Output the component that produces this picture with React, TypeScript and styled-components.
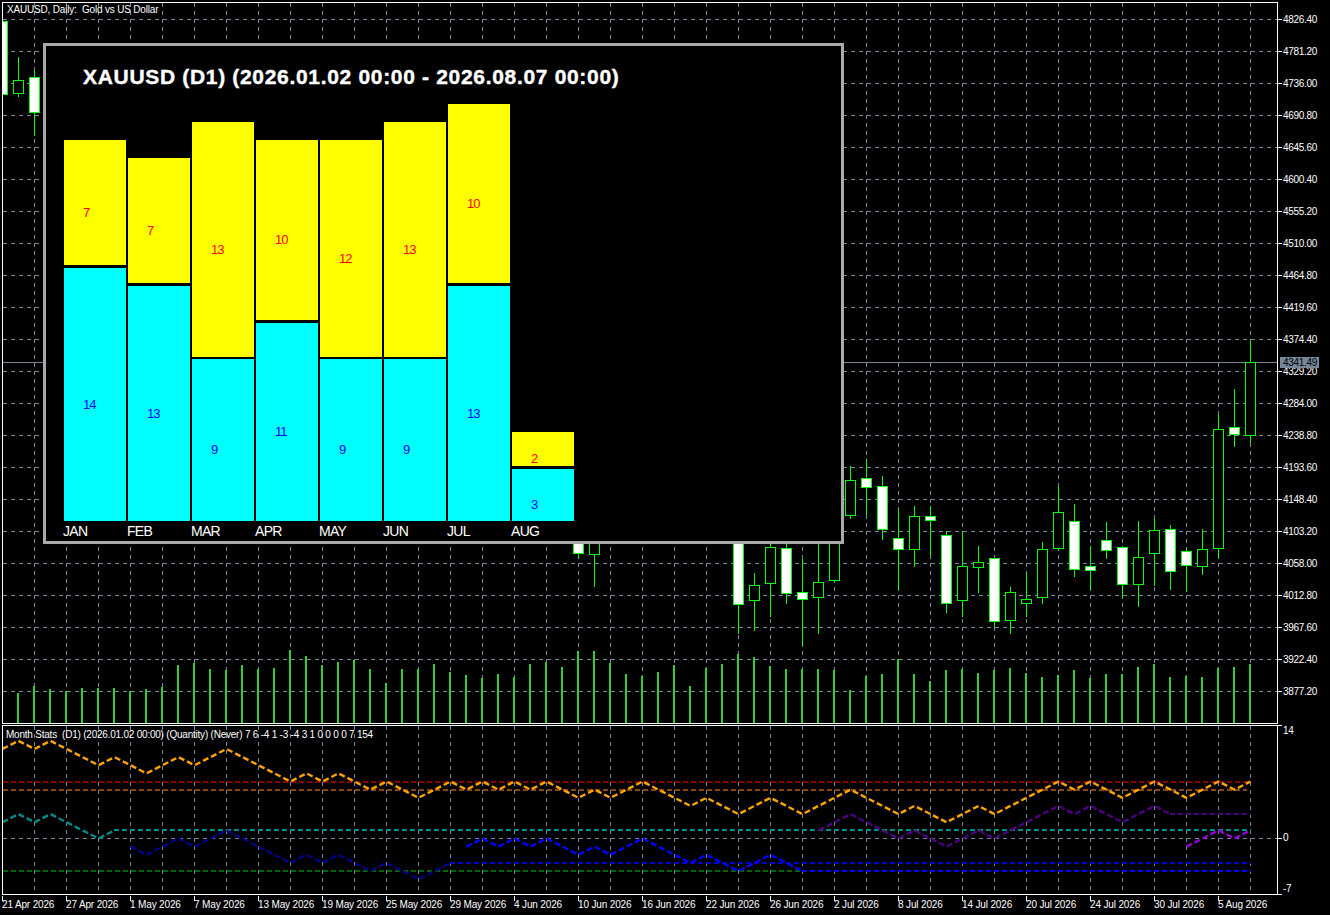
import React from 'react';
import styled, { createGlobalStyle } from 'styled-components';

const GlobalStyle = createGlobalStyle`
  html, body {
    margin: 0;
    background: #000000;
    overflow: hidden;
  }
`;

const GRID = '#778899';
const LIME = '#00ff00';
const VOLUME = '#32cd32';
const FONT = `'Liberation Sans', Arial, sans-serif`;

const Screen = styled.div`
  width: 1330px;
  height: 915px;
  box-sizing: border-box;
  padding: 2px 0 0 2px;
  display: flex;
  background: #000000;
  overflow: hidden;
  color: #ffffff;
  font-family: ${FONT};
`;

const ChartColumn = styled.div`
  width: 1276px;
  display: flex;
  flex-direction: column;
  gap: 1px;
`;

const Pane = styled.div<{ $height: number }>`
  position: relative;
  height: ${(p) => p.$height}px;
  box-sizing: border-box;
  border: 1px solid #ffffff;
`;

const PaneCanvas = styled.svg`
  display: block;
  width: 100%;
  height: 100%;
`;

const PaneCaption = styled.div<{ $left: number; $top: number; $tracking: number }>`
  position: absolute;
  left: ${(p) => p.$left}px;
  top: ${(p) => p.$top}px;
  font-size: 10px;
  line-height: 12px;
  white-space: pre;
  letter-spacing: ${(p) => p.$tracking}px;
`;

const TimeAxis = styled.div`
  display: flex;
  height: 20px;
`;

const TimeCell = styled.div`
  width: 64px;
  flex: none;
  white-space: nowrap;
`;

const TimeTick = styled.div`
  width: 1px;
  height: 5px;
  background: #ffffff;
`;

const TimeLabel = styled.div`
  margin-top: -2px;
  font-size: 10px;
  line-height: 12px;
  letter-spacing: -0.15px;
`;

const PriceAxis = styled.div`
  position: relative;
  flex: 1;
  display: flex;
  flex-direction: column;
`;

const MainScale = styled.div`
  height: 723px;
  box-sizing: border-box;
  padding-top: 1px;
`;

const IndicatorScale = styled.div`
  height: 170px;
  display: grid;
  grid-template-rows: 113px 56px 1px;
`;

const ScaleRow = styled.div<{ $height?: number }>`
  display: flex;
  align-items: flex-start;
  height: ${(p) => (p.$height ? `${p.$height}px` : 'auto')};
`;

const ScaleTick = styled.div<{ $top?: number }>`
  width: 4px;
  height: 1px;
  flex: none;
  margin-top: ${(p) => p.$top ?? 0}px;
  background: #ffffff;
`;

const ScaleLabel = styled.div<{ $top?: number }>`
  margin-top: ${(p) => p.$top ?? 0}px;
  margin-left: 1px;
  font-size: 10px;
  line-height: 8px;
  letter-spacing: -0.3px;
  white-space: nowrap;
`;

const PriceBadge = styled.div`
  position: absolute;
  left: 2px;
  top: 355px;
  width: 39px;
  height: 11px;
  padding-left: 3px;
  box-sizing: border-box;
  background: #778899;
  color: #000000;
  font-size: 10px;
  line-height: 11px;
  letter-spacing: -0.3px;
`;

/* statistics window laid over the chart */
const StatsPanel = styled.div`
  position: absolute;
  left: 40px;
  top: 40px;
  width: 801px;
  height: 501px;
  box-sizing: border-box;
  display: flex;
  flex-direction: column;
  padding-left: 18px;
  background: #000000;
  border: 3px solid #a9a9a9;
`;

const StatsTitle = styled.div`
  height: 54px;
  padding: 4px 0 0 19px;
  display: flex;
  align-items: center;
  font-size: 21px;
  font-weight: 700;
  letter-spacing: 0.68px;
  -webkit-text-stroke: 0.4px #ffffff;
  white-space: nowrap;
`;

const BarRow = styled.div`
  height: 417px;
  display: flex;
  align-items: flex-end;
  gap: 2px;
`;

const MonthColumn = styled.div<{ $gap: number }>`
  width: 62px;
  display: flex;
  flex-direction: column;
  gap: ${(p) => p.$gap}px;
`;

const MonthBlock = styled.div<{ $height: number; $tone: 'loss' | 'gain' }>`
  height: ${(p) => p.$height}px;
  box-sizing: border-box;
  display: flex;
  align-items: center;
  padding: 20px 0 0 19px;
  background: ${(p) => (p.$tone === 'loss' ? '#ffff00' : '#00ffff')};
  color: ${(p) => (p.$tone === 'loss' ? '#ff0000' : '#0000ff')};
  font-size: 13px;
  line-height: 14px;
  letter-spacing: -1px;
`;

const MonthLabels = styled.div`
  display: flex;
  margin-left: -1px;
  padding-top: 3px;
`;

const MonthLabel = styled.div`
  width: 64px;
  font-size: 14px;
  line-height: 14px;
  letter-spacing: -0.7px;
`;

const xAt = (i: number) => 2 + 16 * i;
const gridXs = Array.from({ length: 39 }, (_, i) => 34 + 32 * i);
const gridYs = Array.from({ length: 22 }, (_, i) => 19 + 32 * i);
const prices = gridYs.map((_, i) => (4826.4 - 45.2 * i).toFixed(2));

// x, wick top, wick bottom, body top, body bottom, bearish (white)
const candles: [number, number, number, number, number, boolean][] = [
  [2, 10, 100, 21, 94, true],
  [18, 57, 97, 80, 93, false],
  [34, 70, 136, 77, 112, true],
  [578, 500, 558, 500, 553, true],
  [594, 500, 587, 500, 554, false],
  [738, 500, 634, 500, 604, true],
  [754, 573, 631, 585, 600, false],
  [770, 500, 617, 547, 583, false],
  [786, 543, 604, 548, 593, true],
  [802, 559, 646, 592, 599, true],
  [818, 500, 634, 582, 597, false],
  [834, 500, 582, 500, 580, false],
  [850, 466, 519, 480, 515, false],
  [866, 459, 515, 478, 487, true],
  [882, 476, 540, 486, 529, true],
  [898, 509, 590, 538, 549, true],
  [914, 506, 567, 516, 549, false],
  [930, 506, 556, 516, 520, true],
  [946, 531, 613, 535, 603, true],
  [962, 531, 617, 566, 600, false],
  [978, 546, 593, 562, 567, false],
  [994, 558, 627, 558, 621, true],
  [1010, 587, 634, 592, 620, false],
  [1026, 573, 617, 599, 603, false],
  [1042, 542, 604, 549, 597, false],
  [1058, 486, 551, 512, 548, false],
  [1074, 504, 577, 521, 569, true],
  [1090, 546, 590, 566, 570, true],
  [1106, 522, 559, 540, 550, true],
  [1122, 546, 598, 547, 584, true],
  [1138, 521, 607, 557, 584, false],
  [1154, 518, 586, 530, 553, false],
  [1170, 525, 590, 529, 571, true],
  [1186, 548, 592, 551, 565, true],
  [1202, 529, 575, 549, 566, false],
  [1218, 414, 559, 429, 548, false],
  [1234, 389, 447, 427, 434, true],
  [1250, 340, 443, 362, 435, false],
];

// volume bar tops, one per day starting at x = 18
const volumeTops = [
  693, 686, 689, 691, 688, 688, 688, 691, 689, 687, 665, 663, 669, 670, 665, 669, 668, 650, 656, 665,
  662, 660, 669, 683, 669, 669, 664, 672, 675, 678, 674, 677, 664, 662, 667, 651, 651, 663, 674, 676,
  672, 665, 686, 668, 664, 654, 657, 666, 669, 669, 669, 670, 690, 676, 674, 659, 674, 681, 670, 669,
  673, 670, 668, 673, 677, 675, 670, 678, 674, 674, 667, 664, 677, 676, 677, 668, 667, 664,
];

// running monthly total, one per day starting at x = 2
const total = [
  11, 12, 11, 12, 11, 10, 9, 10, 9, 8, 9, 10, 9, 10, 11, 10, 9, 8, 7, 8, 7, 8, 7, 6, 7, 6, 5, 6, 7, 6, 7, 6, 7, 6,
  7, 6, 5, 6, 5, 6, 7, 6, 5, 4, 5, 4, 3, 4, 5, 4, 3, 4, 5, 6, 5, 4, 3, 4, 3, 2, 3, 4, 3, 4, 5, 6, 7, 6, 7, 6, 5, 6,
  7, 6, 5, 6, 7, 6, 7,
];

const yOf = (v: number) => 838.5 - v * 8.14;

// one polyline per month: colour, first and last day index, offset from the total, flat value once closed
const monthLines = [
  { color: '#008b8b', flatColor: '#008b8b', from: 0, to: 7, offset: -9, flat: 1 },
  { color: '#00008b', flatColor: '#0000cd', from: 8, to: 28, offset: -10, flat: -3 },
  { color: '#0000ff', flatColor: '#0000ff', from: 29, to: 50, offset: -7, flat: -4 },
  { color: '#4b0082', flatColor: '#4b0082', from: 51, to: 73, offset: -3, flat: 3 },
  { color: '#9400d3', flatColor: '#9400d3', from: 74, to: 78, offset: -6, flat: 1 },
];

const lastIndex = total.length - 1;

const pointsFor = (line: (typeof monthLines)[number]) => {
  const pts: string[] = [];
  for (let i = line.from; i <= line.to; i++) {
    pts.push(`${xAt(i) + 0.5},${yOf(total[i] + line.offset)}`);
  }
  return pts.join(' ');
};

const months = [
  { name: 'JAN', loss: 7, lossH: 125, gain: 14, gainH: 253, gap: 3 },
  { name: 'FEB', loss: 7, lossH: 125, gain: 13, gainH: 235, gap: 3 },
  { name: 'MAR', loss: 13, lossH: 235, gain: 9, gainH: 162, gap: 2 },
  { name: 'APR', loss: 10, lossH: 180, gain: 11, gainH: 198, gap: 3 },
  { name: 'MAY', loss: 12, lossH: 217, gain: 9, gainH: 162, gap: 2 },
  { name: 'JUN', loss: 13, lossH: 235, gain: 9, gainH: 162, gap: 2 },
  { name: 'JUL', loss: 10, lossH: 179, gain: 13, gainH: 235, gap: 3 },
  { name: 'AUG', loss: 2, lossH: 34, gain: 3, gainH: 52, gap: 3 },
];

const timeLabels = [
  '21 Apr 2026', '27 Apr 2026', '1 May 2026', '7 May 2026', '13 May 2026', '19 May 2026', '25 May 2026',
  '29 May 2026', '4 Jun 2026', '10 Jun 2026', '16 Jun 2026', '22 Jun 2026', '26 Jun 2026', '2 Jul 2026',
  '8 Jul 2026', '14 Jul 2026', '20 Jul 2026', '24 Jul 2026', '30 Jul 2026', '5 Aug 2026',
];

function VerticalGrid({ top, bottom }: { top: number; bottom: number }) {
  return (
    <>
      {gridXs.map((x) => (
        <line key={x} x1={x + 0.5} x2={x + 0.5} y1={top} y2={bottom} stroke={GRID} strokeDasharray="4 4" />
      ))}
    </>
  );
}

function MainChart() {
  return (
    <PaneCanvas viewBox="3 3 1274 720" shapeRendering="crispEdges">
      <VerticalGrid top={3} bottom={723} />
      {gridYs.map((y) => (
        <line key={y} x1={3} x2={1277} y1={y + 0.5} y2={y + 0.5} stroke={GRID} strokeDasharray="4 4" />
      ))}
      <rect x={3} y={362} width={1274} height={1} fill={GRID} />
      {volumeTops.map((top, i) => (
        <rect key={i} x={17 + 16 * i} y={top} width={2} height={723 - top} fill={VOLUME} />
      ))}
      {candles.map(([x, wickTop, wickBottom, bodyTop, bodyBottom, bearish]) => (
        <g key={x}>
          <rect x={x} y={wickTop} width={1} height={wickBottom - wickTop} fill={LIME} />
          <rect x={x - 5} y={bodyTop} width={11} height={bodyBottom - bodyTop + 1} fill={LIME} />
          <rect
            x={x - 4}
            y={bodyTop + 1}
            width={9}
            height={bodyBottom - bodyTop - 1}
            fill={bearish ? '#ffffff' : '#000000'}
          />
        </g>
      ))}
    </PaneCanvas>
  );
}

function StatsLine({ color, v, from, to }: { color: string; v: number; from: number; to: number }) {
  return (
    <line x1={from} x2={to} y1={yOf(v)} y2={yOf(v)} stroke={color} strokeWidth={2} strokeDasharray="5 3" />
  );
}

function IndicatorChart() {
  return (
    <PaneCanvas viewBox="3 726 1274 168" shapeRendering="crispEdges">
      <VerticalGrid top={726} bottom={894} />
      <line x1={3} x2={1277} y1={838.5} y2={838.5} stroke={GRID} strokeDasharray="4 4" />
      <StatsLine color="#8b0000" v={7} from={3} to={1251} />
      <StatsLine color="#8b4513" v={6} from={3} to={1247} />
      <StatsLine color="#006400" v={-4} from={3} to={802} />
      {monthLines.map((line) => (
        <g key={line.color}>
          {line.to < lastIndex && (
            <StatsLine color={line.flatColor} v={line.flat} from={xAt(line.to)} to={1251} />
          )}
          <polyline
            points={pointsFor(line)}
            fill="none"
            stroke={line.color}
            strokeWidth={2.4}
            strokeDasharray="6 3"
            shapeRendering="geometricPrecision"
          />
        </g>
      ))}
      <polyline
        points={total.map((v, i) => `${xAt(i) + 0.5},${yOf(v)}`).join(' ')}
        fill="none"
        stroke="#ffa500"
        strokeWidth={2.4}
        strokeDasharray="6 3"
        shapeRendering="geometricPrecision"
      />
    </PaneCanvas>
  );
}

export default function App() {
  return (
    <Screen>
      <GlobalStyle />
      <ChartColumn>
        <Pane $height={722}>
          <MainChart />
          <PaneCaption $left={4} $top={1} $tracking={-0.18}>
            {'XAUUSD, Daily:  Gold vs US Dollar'}
          </PaneCaption>
          <StatsPanel>
            <StatsTitle>XAUUSD (D1) (2026.01.02 00:00 - 2026.08.07 00:00)</StatsTitle>
            <BarRow>
              {months.map((m) => (
                <MonthColumn key={m.name} $gap={m.gap}>
                  <MonthBlock $height={m.lossH} $tone="loss">
                    {m.loss}
                  </MonthBlock>
                  <MonthBlock $height={m.gainH} $tone="gain">
                    {m.gain}
                  </MonthBlock>
                </MonthColumn>
              ))}
            </BarRow>
            <MonthLabels>
              {months.map((m) => (
                <MonthLabel key={m.name}>{m.name}</MonthLabel>
              ))}
            </MonthLabels>
          </StatsPanel>
        </Pane>
        <Pane $height={170}>
          <IndicatorChart />
          <PaneCaption $left={3} $top={3} $tracking={-0.22}>
            {'Month Stats  (D1) (2026.01.02 00:00) (Quantity) (Never) 7 6 -4 1 -3 -4 3 1 0 0 0 0 7 154'}
          </PaneCaption>
        </Pane>
        <TimeAxis>
          {timeLabels.map((label) => (
            <TimeCell key={label}>
              <TimeTick />
              <TimeLabel>{label}</TimeLabel>
            </TimeCell>
          ))}
        </TimeAxis>
      </ChartColumn>
      <PriceAxis>
        <MainScale>
          {prices.map((price) => (
            <ScaleRow key={price} $height={32}>
              <ScaleTick $top={16} />
              <ScaleLabel $top={13}>{price}</ScaleLabel>
            </ScaleRow>
          ))}
        </MainScale>
        <IndicatorScale>
          <ScaleRow>
            <ScaleTick />
            <ScaleLabel $top={2}>14</ScaleLabel>
          </ScaleRow>
          <ScaleRow>
            <ScaleTick />
            <ScaleLabel $top={-4}>0</ScaleLabel>
          </ScaleRow>
          <ScaleRow>
            <ScaleTick />
            <ScaleLabel $top={-9}>-7</ScaleLabel>
          </ScaleRow>
        </IndicatorScale>
        <PriceBadge>4341.49</PriceBadge>
      </PriceAxis>
    </Screen>
  );
}
